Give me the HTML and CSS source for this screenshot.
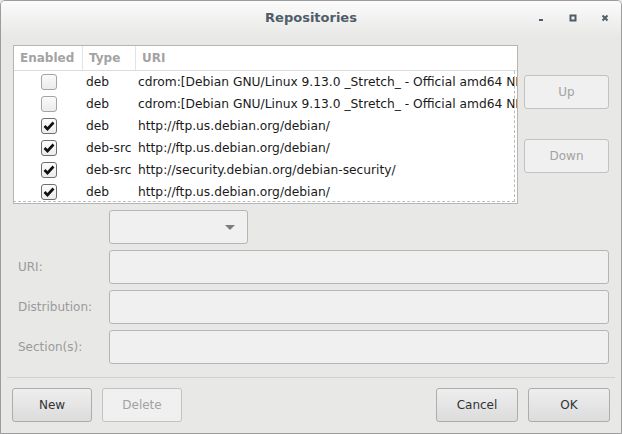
FILE: index.html
```html
<!DOCTYPE html>
<html>
<head>
<meta charset="utf-8">
<link rel="stylesheet" href="styles.css">
</head>
<body>
<div class="window">
  <div class="titlebar">
    <div class="tb-side"></div>
    <div class="title">Repositories</div>
    <div class="tb-side tb-controls">
      <svg class="ctl" width="12" height="12" viewBox="0 0 12 12"><rect x="4" y="7" width="4" height="2" fill="#4f5d68"/></svg>
      <svg class="ctl" width="12" height="12" viewBox="0 0 12 12"><rect x="3.5" y="3.5" width="5" height="5" fill="none" stroke="#4f5d68" stroke-width="2"/></svg>
      <svg class="ctl" width="12" height="12" viewBox="0 0 12 12"><path d="M3.5 3.5 L8.5 8.5 M8.5 3.5 L3.5 8.5" stroke="#4f5d68" stroke-width="2"/></svg>
    </div>
  </div>
  <div class="content">
    <div class="top-row">
      <div class="tree">
        <div class="tree-head">
          <div class="col c1">Enabled</div>
          <div class="col c2">Type</div>
          <div class="col c3">URI</div>
        </div>
        <div class="tree-body">
          <div class="row"><div class="cell c1"><span class="check"></span></div><div class="cell c2">deb</div><div class="cell c3">cdrom:[Debian GNU/Linux 9.13.0 _Stretch_ - Official amd64 NETINST]</div></div>
          <div class="row"><div class="cell c1"><span class="check"></span></div><div class="cell c2">deb</div><div class="cell c3">cdrom:[Debian GNU/Linux 9.13.0 _Stretch_ - Official amd64 NETINST]</div></div>
          <div class="row"><div class="cell c1"><span class="check on"><svg width="14" height="14" viewBox="0 0 14 14"><path d="M2.5 7 L5.5 10 L11.5 3.5" fill="none" stroke="#111" stroke-width="2.6"/></svg></span></div><div class="cell c2">deb</div><div class="cell c3">http://ftp.us.debian.org/debian/</div></div>
          <div class="row"><div class="cell c1"><span class="check on"><svg width="14" height="14" viewBox="0 0 14 14"><path d="M2.5 7 L5.5 10 L11.5 3.5" fill="none" stroke="#111" stroke-width="2.6"/></svg></span></div><div class="cell c2">deb-src</div><div class="cell c3">http://ftp.us.debian.org/debian/</div></div>
          <div class="row"><div class="cell c1"><span class="check on"><svg width="14" height="14" viewBox="0 0 14 14"><path d="M2.5 7 L5.5 10 L11.5 3.5" fill="none" stroke="#111" stroke-width="2.6"/></svg></span></div><div class="cell c2">deb-src</div><div class="cell c3">http://security.debian.org/debian-security/</div></div>
          <div class="row"><div class="cell c1"><span class="check on"><svg width="14" height="14" viewBox="0 0 14 14"><path d="M2.5 7 L5.5 10 L11.5 3.5" fill="none" stroke="#111" stroke-width="2.6"/></svg></span></div><div class="cell c2">deb</div><div class="cell c3">http://ftp.us.debian.org/debian/</div></div>
          <div class="focus"></div>
        </div>
      </div>
      <div class="side-buttons">
        <button class="btn disabled side">Up</button>
        <button class="btn disabled side">Down</button>
      </div>
    </div>
    <div class="form">
      <div class="label"></div>
      <div class="combo"><svg width="10" height="6" viewBox="0 0 10 6"><path d="M0 0 L10 0 L5 5 Z" fill="#7c7c7c"/></svg></div>
      <div class="label">URI:</div>
      <div class="entry"></div>
      <div class="label">Distribution:</div>
      <div class="entry"></div>
      <div class="label">Section(s):</div>
      <div class="entry"></div>
    </div>
  </div>
  <div class="separator"></div>
  <div class="footer">
    <div class="group">
      <button class="btn">New</button>
      <button class="btn disabled">Delete</button>
    </div>
    <div class="group">
      <button class="btn wide">Cancel</button>
      <button class="btn wide">OK</button>
    </div>
  </div>
</div>
</body>
</html>
```

FILE: styles.css
```css
* { box-sizing: border-box; }
html, body { margin: 0; padding: 0; }
body {
  width: 622px;
  height: 434px;
  font-family: "DejaVu Sans", sans-serif;
  font-size: 12px;
  background: #e8e8e7;
}
.window {
  width: 622px;
  height: 434px;
  border: 1px solid #9c9c9c;
  border-radius: 5px 5px 0 0;
  background: #e8e8e7;
  overflow: hidden;
}
.titlebar {
  height: 36px;
  display: grid;
  grid-template-columns: 1fr auto 1fr;
  align-items: center;
  background: linear-gradient(#fbfbfb, #e8e8e7);
}
.title {
  font-weight: bold;
  font-size: 13px;
  color: #4f5d68;
  padding-bottom: 3px;
}
.tb-controls {
  display: flex;
  justify-content: flex-end;
  align-items: center;
  padding-right: 10px;
  gap: 20px;
  padding-bottom: 3px;
}
.ctl { display: block; }
.content {
  padding: 8px 12px 0 12px;
}
.top-row {
  display: flex;
  gap: 6px;
}
.tree {
  width: 505px;
  height: 159px;
  border: 1px solid #b5b5b5;
  background: #ffffff;
  overflow: hidden;
}
.tree-head {
  display: flex;
  height: 25px;
  border-bottom: 1px solid #dcdcdc;
  font-weight: bold;
  color: #a3a3a3;
}
.tree-head .col {
  display: flex;
  align-items: center;
  padding-left: 6px;
}
.tree-head .col + .col { border-left: 1px solid #e3e3e3; }
.c1 { width: 68px; flex: none; }
.c2 { width: 53px; flex: none; }
.c3 { flex: 1; white-space: nowrap; }
.tree-body {
  position: relative;
  height: 132px;
  overflow: hidden;
  color: #1a1a1a;
  font-size: 12.25px;
}
.row {
  display: flex;
  height: 22px;
  align-items: center;
}
.row .c1 {
  display: flex;
  justify-content: center;
  width: 69px;
}
.row .c2 { padding-left: 3px; width: 55px; }
.row .c3 { overflow: hidden; }
.check {
  display: block;
  width: 16px;
  height: 16px;
  border: 1px solid #a4a4a4;
  border-radius: 3px;
  background: linear-gradient(#fafafa, #ebebeb);
}
.check.on {
  border-color: #6e6e6e;
  background: linear-gradient(#fdfdfd, #ececec);
}
.check svg { display: block; margin: 0; }
.focus {
  position: absolute;
  left: -1px;
  top: 0;
  width: 502px;
  height: 131px;
  border-right: 1px dashed #bdbdbd;
  border-bottom: 1px dashed #bdbdbd;
  pointer-events: none;
}
.side-buttons {
  display: flex;
  flex-direction: column;
  gap: 30px;
  padding-top: 30px;
}
.btn {
  font-family: "DejaVu Sans", sans-serif;
  font-size: 12px;
  height: 34px;
  width: 80px;
  border: 1px solid #adadad;
  border-radius: 3px;
  background: linear-gradient(#eeeeee, #dcdcdc);
  color: #2e3436;
  padding: 0;
  margin: 0;
}
.btn.side { width: 85px; }
.btn.wide { width: 82px; }
.btn.disabled {
  background: #f0f0f0;
  border-color: #c2c2c2;
  color: #a2a2a2;
}
.form {
  margin-top: 6px;
  display: grid;
  grid-template-columns: 96px 500px;
  grid-auto-rows: 34px;
  row-gap: 6px;
}
.label {
  display: flex;
  align-items: center;
  padding-left: 5px;
  color: #9a9a9a;
}
.combo {
  width: 139px;
  border: 1px solid #b5b5b5;
  border-radius: 3px;
  background: #f0f0f0;
  display: flex;
  align-items: center;
  justify-content: flex-end;
  padding-right: 12px;
}
.combo svg { display: block; margin-top: 2px; }
.entry {
  border: 1px solid #b5b5b5;
  border-radius: 3px;
  background: #f0f0f0;
}
.separator {
  margin: 13px 6px 0 6px;
  height: 1px;
  background: #d0d0d0;
}
.footer {
  display: flex;
  justify-content: space-between;
  padding: 10px 11px 0 11px;
}
.group {
  display: flex;
  gap: 10px;
}
```
